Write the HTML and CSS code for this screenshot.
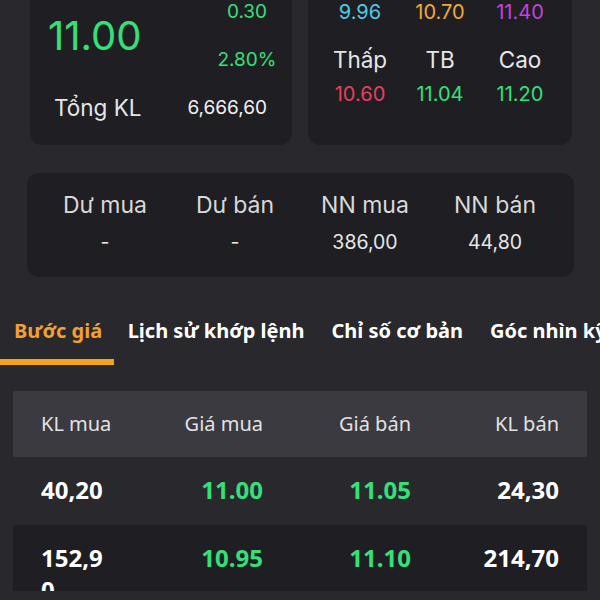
FILE: index.html
```html
<html>

<head>
    <title>Bảng giá</title>
    <meta charset="utf-8">
    <link rel="stylesheet" href="styles.css">
</head>

<body>
    <div class="screen">
        <div class="stats">
            <div class="card price-card">
                <div class="price-top">
                    <div class="price up">11.00</div>
                    <div class="change">
                        <span class="up">0.30</span>
                        <span class="up">2.80%</span>
                    </div>
                </div>
                <div class="volume">
                    <span class="volume-label">Tổng KL</span>
                    <span class="volume-value">6,666,60</span>
                </div>
            </div>
            <div class="card range-card">
                <span class="ref">9.96</span>
                <span class="open">10.70</span>
                <span class="ceil">11.40</span>
                <span class="range-label">Thấp</span>
                <span class="range-label">TB</span>
                <span class="range-label">Cao</span>
                <span class="range-value down">10.60</span>
                <span class="range-value up">11.04</span>
                <span class="range-value up">11.20</span>
            </div>
        </div>

        <div class="card flow-card">
            <span class="flow-label">Dư mua</span>
            <span class="flow-label">Dư bán</span>
            <span class="flow-label">NN mua</span>
            <span class="flow-label">NN bán</span>
            <span class="flow-value">-</span>
            <span class="flow-value">-</span>
            <span class="flow-value">386,00</span>
            <span class="flow-value">44,80</span>
        </div>

        <!-- tabs -->
        <div class="tabs">
            <div class="tab active">Bước giá</div>
            <div class="tab">Lịch sử khớp lệnh</div>
            <div class="tab">Chỉ số cơ bản</div>
            <div class="tab">Góc nhìn kỹ thuật</div>
        </div>

        <div class="book">
            <div class="book-row book-head">
                <span>KL mua</span>
                <span>Giá mua</span>
                <span>Giá bán</span>
                <span>KL bán</span>
            </div>
            <div class="book-row">
                <span class="qty">40,20</span>
                <span class="up">11.00</span>
                <span class="up">11.05</span>
                <span>24,30</span>
            </div>
            <div class="book-row odd">
                <span class="qty">152,90</span>
                <span class="up">10.95</span>
                <span class="up">11.10</span>
                <span>214,70</span>
            </div>
        </div>
    </div>
</body>

</html>
```

FILE: styles.css
```css
body {
    margin: 0;
    background-color: #28282d;
    color: #e6e6e6;
    font-family: Inter, "Noto Sans", sans-serif;
}

.screen {
    width: 600px;
    height: 600px;
    overflow: hidden;
}

.card {
    background-color: #1f1f23;
    border-radius: 12px;
    box-sizing: border-box;
}

.up {
    color: #35e07a;
}

.down {
    color: #e8405c;
}

/* top two cards, page is scrolled a little */
.stats {
    display: flex;
    gap: 16px;
    margin: -14px 28px 0 30px;
}

.price-card {
    width: 262px;
    padding: 16px 10px 25px 18px;
}

.price-top {
    display: flex;
    justify-content: space-between;
    align-items: center;
}

.price {
    font-size: 40px;
    line-height: 46px;
}

.change {
    width: 70px;
    display: flex;
    flex-direction: column;
    align-items: center;
    gap: 28px;
    font-size: 19px;
    line-height: 20px;
}

.volume {
    display: flex;
    justify-content: space-between;
    align-items: center;
    margin: 26px 15px 0 6px;
    line-height: 24px;
}

.volume-label {
    font-size: 22.5px;
}

.volume-value {
    font-size: 19px;
    color: #f2f2f2;
}

.range-card {
    width: 264px;
    padding: 16px 20px 41px 12px;
    display: grid;
    grid-template-columns: repeat(3, 80px);
    text-align: center;
    font-size: 20px;
    line-height: 20px;
}

.ref {
    color: #4fcbe6;
}

.open {
    color: #f2a93b;
}

.ceil {
    color: #c641de;
}

.range-label {
    margin-top: 26px;
    font-size: 22.5px;
    line-height: 24px;
    color: #e6e6e6;
}

.range-value {
    margin-top: 12px;
}

.flow-card {
    margin: 28px 26px 0 27px;
    padding: 19px 14px 25px 13px;
    display: grid;
    grid-template-columns: repeat(4, 130px);
    text-align: center;
}

.flow-label {
    font-size: 23px;
    line-height: 26px;
    color: #d9d9d9;
}

.flow-value {
    margin-top: 14px;
    font-size: 19.5px;
    line-height: 20px;
    color: #e6e6e6;
}

.tabs {
    display: flex;
    margin-top: 40px;
    font-family: "Noto Sans", sans-serif;
    font-weight: bold;
    font-size: 20px;
    line-height: 28px;
    white-space: nowrap;
}

.tab {
    padding: 0 13.5px 14px 13.5px;
    border-bottom: 6px solid transparent;
    color: #ffffff;
}

.tab:first-child {
    padding-left: 14px;
    padding-right: 12px;
}

.tab.active {
    color: #f2a031;
    border-bottom-color: #f5a31c;
}

.book {
    margin: 26px 13px 0 13px;
    font-family: "Noto Sans", sans-serif;
}

.book-row {
    display: grid;
    grid-template-columns: 74px repeat(3, 1fr);
    padding: 17px 28px 0 28px;
    height: 68px;
    box-sizing: border-box;
    overflow: hidden;
    font-size: 24px;
    font-weight: bold;
    line-height: 32px;
    color: #ffffff;
}

.book-row span {
    text-align: right;
    white-space: nowrap;
}

.book-row span:first-child {
    text-align: left;
}

.book-row .qty {
    padding-right: 6px;
    white-space: normal;
    word-break: break-all;
}

.book-head {
    height: 66px;
    padding-top: 0;
    align-items: center;
    background-color: #3a3a40;
    font-size: 20px;
    font-weight: normal;
    color: #e2e2e2;
}

.book-row.odd {
    height: 66px;
    background-color: #1f1f23;
}
```
